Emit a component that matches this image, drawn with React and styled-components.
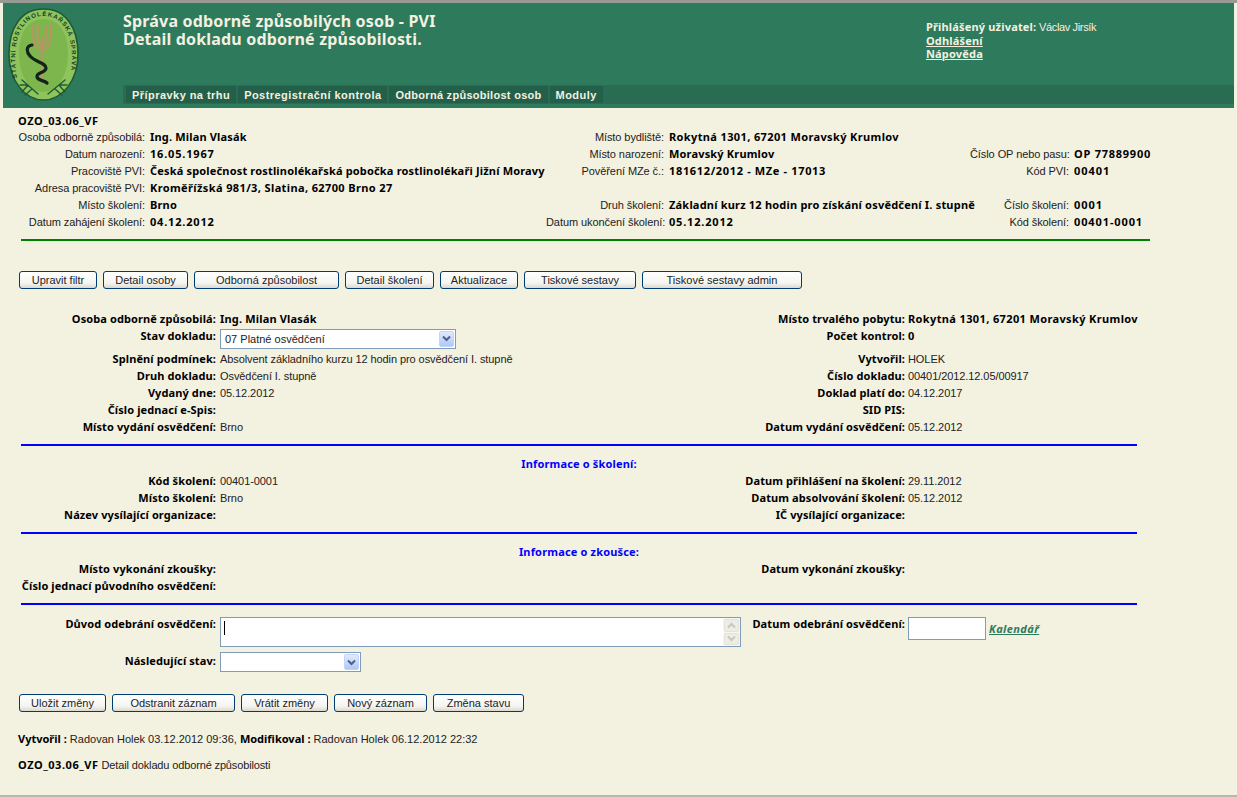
import React from 'react'
import styled, { createGlobalStyle, css } from 'styled-components'

const GlobalStyle = createGlobalStyle`
  html, body {
    margin: 0;
    padding: 0;
    background: #F3F1E0;
  }
  body {
    font-family: "Liberation Sans", Tahoma, sans-serif;
    font-size: 11px;
    color: #000;
  }
`

// bold tahoma is wider than any installed font, so noto with a bit of spacing
const boldText = css`
  font-family: "Noto Sans", Tahoma, sans-serif;
  font-weight: bold;
  letter-spacing: 0.17px;
`

// digits in the original font run wider than the letters
const digitSpacing = text => {
  const digits = text.replace(/\D/g, '').length
  return text ? +(0.17 + (0.8 * digits) / text.length).toFixed(2) : 0
}

const Page = styled.div`
  width: 1237px;
  height: 797px;
  box-sizing: border-box;
  border-top: 3px solid #9a9a94;
  border-bottom: 2px solid #b9b8ac;
  overflow: hidden;
`

const Header = styled.div`
  position: relative;
  display: flex;
  margin: 0 3px;
  height: 105px;
  background: #2D7A5C;
`

const LogoBox = styled.div`
  width: 120px;
  flex-shrink: 0;
  padding: 5px 0 0 5px;
  box-sizing: border-box;
`

const HeadMain = styled.div`
  flex: 1;
  display: flex;
  flex-direction: column;
`

const HeadTop = styled.div`
  flex: 1;
  display: flex;
`

const Titles = styled.div`
  width: 803px;
  padding-top: 9px;
  color: #F3F1E0;
  font-family: "Noto Sans", sans-serif;
  font-weight: bold;
  font-size: 16px;
  letter-spacing: 0.18px;
  line-height: 18px;
`

const TitleLine = styled.div`
  height: 18px;
  white-space: nowrap;
`

const UserBox = styled.div`
  padding-top: 17px;
  color: #F3F1E0;
  line-height: 13px;
  letter-spacing: -0.35px;
`

const UserName = styled.b`
  ${boldText}
`

const UserLink = styled.a`
  display: block;
  ${boldText}
  color: #F3F1E0;
  text-decoration: underline;
`

const NavBar = styled.div`
  display: flex;
  gap: 2px;
  height: 17px;
  margin-bottom: 4px;
  padding: 1px 0 1px 3px;
  background: #2A6B53;
`

const NavItem = styled.a`
  padding: 0 6px;
  line-height: 18px;
  background: #235F49;
  color: #F3F1E0;
  font-family: "Liberation Sans", sans-serif;
  font-weight: bold;
  font-size: 11px;
  letter-spacing: ${p => p.$ls || 0.45}px;
`

const Content = styled.div`
  padding: 5px 0 0 18px;
`

const PageCode = styled.div`
  ${boldText}
  letter-spacing: 0.55px;
  line-height: 15px;
`

const InfoGrid = styled.div`
  display: grid;
  grid-template-columns: 127px 401px 118px 306px 99px 1fr;
  grid-auto-rows: 17px;
  align-items: center;
`

const InfoLabel = styled.div`
  text-align: right;
  white-space: nowrap;
  color: #1c1c1c;
  letter-spacing: -0.08px;
`

const InfoValue = styled.div`
  padding-left: 5px;
  ${boldText}
  letter-spacing: ${p => p.$ls}px;
  white-space: nowrap;
`

const GreenRule = styled.div`
  height: 2px;
  margin: 9px 0 0 3px;
  width: 1129px;
  background: #008000;
`

const ButtonRow = styled.div`
  display: flex;
  gap: 6px;
  margin-top: ${p => p.$top}px;
  margin-left: 1px;
`

const Btn = styled.button`
  width: ${p => p.$w}px;
  height: 18px;
  padding: 0;
  box-sizing: border-box;
  border: 1px solid #003c74;
  border-radius: 3px;
  background: linear-gradient(#ffffff, #f4f4f0 70%, #dcd8ce);
  font-family: inherit;
  font-size: 11px;
  color: #222;
`

const FormGrid = styled.div`
  display: grid;
  grid-template-columns: 198px 491px 198px 1fr;
  margin-top: ${p => p.$top || 0}px;
  align-items: center;
`

const Label = styled.div`
  height: ${p => p.$h || 17}px;
  line-height: ${p => p.$lh || 17}px;
  text-align: right;
  ${boldText}
  letter-spacing: 0.1px;
  white-space: nowrap;
`

const Value = styled.div`
  height: ${p => p.$h || 17}px;
  line-height: 18px;
  padding-left: ${p => (p.$right ? 3 : 4)}px;
  color: #222;
  letter-spacing: -0.08px;
  white-space: nowrap;
`

const BoldValue = styled(Value)`
  line-height: 17px;
  ${boldText}
  letter-spacing: ${p => p.$ls}px;
  color: #000;
`

const BlueRule = styled.div`
  width: 1116px;
  height: 2px;
  margin: ${p => p.$top}px 0 0 3px;
  background: #0000FF;
`

const SectionTitle = styled.div`
  width: 1122px;
  margin-top: 9px;
  line-height: 17px;
  text-align: center;
  ${boldText}
  color: #0000FF;
`

const SelectBox = styled.div`
  position: relative;
  width: ${p => p.$w}px;
  height: 20px;
  box-sizing: border-box;
  margin-left: 4px;
  padding-left: 4px;
  border: 1px solid #7F9DB9;
  background: #fff;
  line-height: 19px;
  color: #222;
`

const SelectArrow = styled.span`
  position: absolute;
  top: 1px;
  right: 1px;
  width: 15px;
  height: 16px;
  display: flex;
  align-items: center;
  justify-content: center;
  background: linear-gradient(#e1eafe, #aec8f7);
  border-radius: 2px;
  border: 1px solid #c3d3fd;
  box-sizing: border-box;
`

const Chevron = ({ color = '#4d6185', up }) => (
  <svg width="9" height="7" viewBox="0 0 9 7">
    <path d={up ? 'M1 5.5 L4.5 2 L8 5.5' : 'M1 1.5 L4.5 5 L8 1.5'} fill="none" stroke={color} strokeWidth="2" />
  </svg>
)

const ReasonGrid = styled.div`
  display: grid;
  grid-template-columns: 198px 532px 157px 84px 1fr;
  margin-top: 12px;
`

const TextBox = styled.div`
  position: relative;
  margin-left: 4px;
  width: 521px;
  height: 30px;
  box-sizing: border-box;
  border: 1px solid #7F9DB9;
  background: #fff;
`

const Caret = styled.span`
  position: absolute;
  left: 3px;
  top: 3px;
  width: 1px;
  height: 14px;
  background: #000;
`

const ScrollTrack = styled.div`
  position: absolute;
  top: 0;
  right: 0;
  bottom: 0;
  width: 17px;
  display: flex;
  flex-direction: column;
  gap: 1px;
  padding: 1px;
  box-sizing: border-box;
  background: #f6f6f2;
`

const ScrollBtn = styled.div`
  flex: 1;
  display: flex;
  align-items: center;
  justify-content: center;
  background: #eeede5;
  border: 1px solid #e4e3da;
  border-radius: 2px;
`

const DateInput = styled.div`
  width: 78px;
  height: 23px;
  box-sizing: border-box;
  margin-left: 3px;
  border: 1px solid #7F9DB9;
  background: #fff;
`

const CalendarLink = styled.a`
  margin-top: 3px;
  ${boldText}
  letter-spacing: 0.4px;
  font-style: italic;
  color: #2D7A5C;
  text-decoration: underline;
  line-height: 17px;
`

const NextRow = styled.div`
  display: grid;
  grid-template-columns: 198px 1fr;
  margin-top: 5px;
`

const Audit = styled.div`
  margin-top: 19px;
  line-height: 15px;
  color: #222;
`

const Strong = styled.b`
  ${boldText}
  letter-spacing: 0;
  color: #000;
`

const CodeStrong = styled(Strong)`
  letter-spacing: 0.55px;
`

const Footnote = styled.div`
  margin-top: 10px;
  line-height: 15px;
  color: #222;
  letter-spacing: -0.14px;
`

const Logo = () => (
  <svg width="71" height="93" viewBox="0 0 71 93">
    <defs>
      <path id="ring" d="M9 70 C3 32 13 8 35.5 8 C58 8 68 32 62 70" />
    </defs>
    <path d="M35.5 1 C58 1 70 20 70 46 C70 73 54 92 35.5 92 C17 92 1 73 1 46 C1 20 13 1 35.5 1 Z" fill="#8FC45C" stroke="#1E5A36" strokeWidth="1.6" />
    <path d="M35.5 11 C52 11 60 26 60 46 C60 68 49 84 35.5 84 C22 84 11 68 11 46 C11 26 19 11 35.5 11 Z" fill="#7DB64C" />
    <text fontFamily="Liberation Sans, sans-serif" fontSize="6.2" fontWeight="bold" fill="#15402a">
      <textPath href="#ring" textLength="146" lengthAdjust="spacing">STÁTNÍ ROSTLINOLÉKAŘSKÁ SPRÁVA</textPath>
    </text>
    <g fill="none" stroke="#b09a62" strokeWidth="2.6">
      <path d="M34 30 V76" />
      <path d="M25 15 V28 C25 36 30 40 34 44" />
      <path d="M43 15 V28 C43 36 38 40 34 44" />
      <path d="M30 17 V30 C30 35 32 37 34 39" />
      <path d="M38 17 V30 C38 35 36 37 34 39" />
    </g>
    <path d="M24 37 C17 38 19 45 22 48 C27 54 38 55 38 60 C38 65 28 64 29 69 C30 73 36 72 39 75" fill="none" stroke="#10241a" strokeWidth="3.2" strokeLinecap="round" />
    <g fill="none" stroke="#1f5a36" strokeWidth="1.4" strokeLinecap="round">
      <path d="M14 72 L30 86 M20 77 L14 84 M24 81 L17 87 M20 77 L12 77" />
      <path d="M57 72 L40 86 M51 77 L57 84 M47 81 L54 87 M51 77 L59 77" />
    </g>
  </svg>
)

const info = [
  ['Osoba odborně způsobilá:', 'Ing. Milan Vlasák', 'Místo bydliště:', 'Rokytná 1301, 67201 Moravský Krumlov', '', ''],
  ['Datum narození:', '16.05.1967', 'Místo narození:', 'Moravský Krumlov', 'Číslo OP nebo pasu:', 'OP 77889900'],
  ['Pracoviště PVI:', 'Česká společnost rostlinolékařská pobočka rostlinolékaři Jižní Moravy', 'Pověření MZe č.:', '181612/2012 - MZe - 17013', 'Kód PVI:', '00401'],
  ['Adresa pracoviště PVI:', 'Kroměřížská 981/3, Slatina, 62700 Brno 27', '', '', '', ''],
  ['Místo školení:', 'Brno', 'Druh školení:', 'Základní kurz 12 hodin pro získání osvědčení I. stupně', 'Číslo školení:', '0001'],
  ['Datum zahájení školení:', '04.12.2012', 'Datum ukončení školení:', '05.12.2012', 'Kód školení:', '00401-0001'],
]

const topButtons = [
  ['Upravit filtr', 78], ['Detail osoby', 85], ['Odborná způsobilost', 145], ['Detail školení', 89],
  ['Aktualizace', 78], ['Tiskové sestavy', 112], ['Tiskové sestavy admin', 160],
]

const bottomButtons = [
  ['Uložit změny', 87], ['Odstranit záznam', 123], ['Vrátit změny', 87], ['Nový záznam', 93], ['Změna stavu', 91],
]

const Row = ({ l1, v1, l2, v2 }) => (
  <>
    <Label>{l1}</Label>
    <Value>{v1}</Value>
    <Label>{l2}</Label>
    <Value $right>{v2}</Value>
  </>
)

export default function App() {
  const address = 'Rokytná 1301, 67201 Moravský Krumlov'
  return (
    <Page>
      <GlobalStyle />
      <Header>
        <LogoBox><Logo /></LogoBox>
        <HeadMain>
          <HeadTop>
            <Titles>
              <TitleLine>Správa odborně způsobilých osob - PVI</TitleLine>
              <TitleLine>Detail dokladu odborné způsobilosti.</TitleLine>
            </Titles>
            <UserBox>
              <UserName>Přihlášený uživatel:</UserName> Václav Jirsík
              <UserLink>Odhlášení</UserLink>
              <UserLink>Nápověda</UserLink>
            </UserBox>
          </HeadTop>
          <NavBar>
            <NavItem>Přípravky na trhu</NavItem>
            <NavItem>Postregistrační kontrola</NavItem>
            <NavItem $ls={0.28}>Odborná způsobilost osob</NavItem>
            <NavItem>Moduly</NavItem>
          </NavBar>
        </HeadMain>
      </Header>

      <Content>
        <PageCode>OZO_03.06_VF</PageCode>
        <InfoGrid>
          {info.flat().map((t, i) =>
            i % 2 === 0
              ? <InfoLabel key={i}>{t}</InfoLabel>
              : <InfoValue key={i} $ls={digitSpacing(t)}>{t}</InfoValue>
          )}
        </InfoGrid>
        <GreenRule />

        <ButtonRow $top={30}>
          {topButtons.map(([t, w]) => <Btn key={t} $w={w}>{t}</Btn>)}
        </ButtonRow>

        <FormGrid $top={21}>
          <Label>Osoba odborně způsobilá:</Label>
          <BoldValue $ls={0.17}>Ing. Milan Vlasák</BoldValue>
          <Label>Místo trvalého pobytu:</Label>
          <BoldValue $right $ls={digitSpacing(address)}>{address}</BoldValue>
          <Label $h={23}>Stav dokladu:</Label>
          <SelectBox $w={236}>
            07 Platné osvědčení
            <SelectArrow><Chevron /></SelectArrow>
          </SelectBox>
          <Label $h={23}>Počet kontrol:</Label>
          <BoldValue $h={23} $right $ls={0.17}>0</BoldValue>
          <Row l1="Splnění podmínek:" v1="Absolvent základního kurzu 12 hodin pro osvědčení I. stupně" l2="Vytvořil:" v2="HOLEK" />
          <Row l1="Druh dokladu:" v1="Osvědčení I. stupně" l2="Číslo dokladu:" v2="00401/2012.12.05/00917" />
          <Row l1="Vydaný dne:" v1="05.12.2012" l2="Doklad platí do:" v2="04.12.2017" />
          <Row l1="Číslo jednací e-Spis:" v1="" l2="SID PIS:" v2="" />
          <Row l1="Místo vydání osvědčení:" v1="Brno" l2="Datum vydání osvědčení:" v2="05.12.2012" />
        </FormGrid>
        <BlueRule $top={9} />

        <SectionTitle>Informace o školení:</SectionTitle>
        <FormGrid>
          <Row l1="Kód školení:" v1="00401-0001" l2="Datum přihlášení na školení:" v2="29.11.2012" />
          <Row l1="Místo školení:" v1="Brno" l2="Datum absolvování školení:" v2="05.12.2012" />
          <Row l1="Název vysílající organizace:" v1="" l2="IČ vysílající organizace:" v2="" />
        </FormGrid>
        <BlueRule $top={9} />

        <SectionTitle>Informace o zkoušce:</SectionTitle>
        <FormGrid>
          <Row l1="Místo vykonání zkoušky:" v1="" l2="Datum vykonání zkoušky:" v2="" />
          <Row l1="Číslo jednací původního osvědčení:" v1="" l2="" v2="" />
        </FormGrid>
        <BlueRule $top={9} />

        <ReasonGrid>
          <Label $lh={13}>Důvod odebrání osvědčení:</Label>
          <TextBox>
            <Caret />
            <ScrollTrack>
              <ScrollBtn><Chevron up color="#c9c8bc" /></ScrollBtn>
              <ScrollBtn><Chevron color="#c9c8bc" /></ScrollBtn>
            </ScrollTrack>
          </TextBox>
          <Label $lh={13}>Datum odebrání osvědčení:</Label>
          <DateInput />
          <CalendarLink>Kalendář</CalendarLink>
        </ReasonGrid>
        <NextRow>
          <Label>Následující stav:</Label>
          <SelectBox $w={141}>
            <SelectArrow><Chevron /></SelectArrow>
          </SelectBox>
        </NextRow>

        <ButtonRow $top={22}>
          {bottomButtons.map(([t, w]) => <Btn key={t} $w={w}>{t}</Btn>)}
        </ButtonRow>

        <Audit>
          <Strong>Vytvořil :</Strong> Radovan Holek 03.12.2012 09:36, <Strong>Modifikoval :</Strong> Radovan Holek 06.12.2012 22:32
        </Audit>
        <Footnote>
          <CodeStrong>OZO_03.06_VF</CodeStrong> Detail dokladu odborné způsobilosti
        </Footnote>
      </Content>
    </Page>
  )
}
